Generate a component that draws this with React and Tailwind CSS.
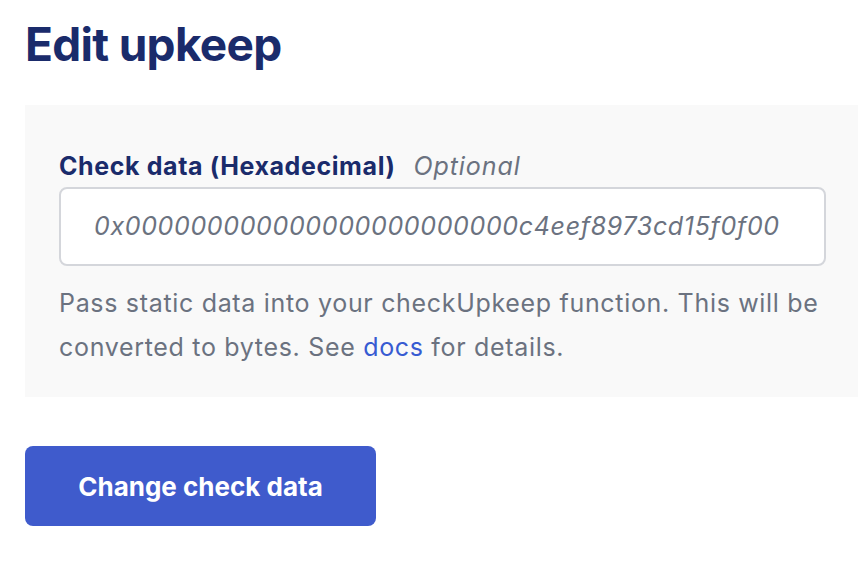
import React from "react";

const HEX = "0x000000000000000000000000c4eef8973cd15f0f00";

function App() {
  return (
    <div className="w-[864px] h-[564px] bg-white pl-[25px] pt-[14px] font-['Inter',sans-serif]">
      {/* title */}
      <h1 className="text-[46px] leading-[60px] font-bold text-[#1a2b6b] tracking-[-0.7px]">
        Edit upkeep
      </h1>

      {/* check data panel */}
      <div className="mt-[31px] w-[833px] h-[292px] bg-[#f9f9f9] px-[34px] pt-[44px]">
        <label className="flex items-baseline gap-[18px] text-[25px] leading-[34px] tracking-[0.6px]">
          <span className="font-bold text-[#1a2b6b]">Check data (Hexadecimal)</span>
          <span className="italic text-[#6b7280] tracking-[0.9px]">Optional</span>
        </label>
        <div className="mt-[4px] w-[767px] h-[79px] bg-white border-2 border-[#d4d6db] rounded-[8px] flex items-center pl-[33px] pr-[33px] overflow-hidden">
          <input
            readOnly
            placeholder={HEX}
            className="w-full bg-transparent outline-none text-[25px] italic tracking-[0.66px] placeholder:text-[#6b7280] placeholder:italic"
          />
        </div>
        <p className="mt-[15px] text-[25px] leading-[44px] tracking-[0.68px] text-[#6b7280]">
          Pass static data into your checkUpkeep function. This will be converted to bytes. See{" "}
          <a href="#" className="text-[#375bd2]">docs</a> for details.
        </p>
      </div>

      {/* action */}
      <button className="mt-[49px] w-[351px] h-[80px] rounded-[8px] bg-[#3f5bcc] text-white text-[26px] font-bold">
        Change check data
      </button>
    </div>
  );
}

export default App;
